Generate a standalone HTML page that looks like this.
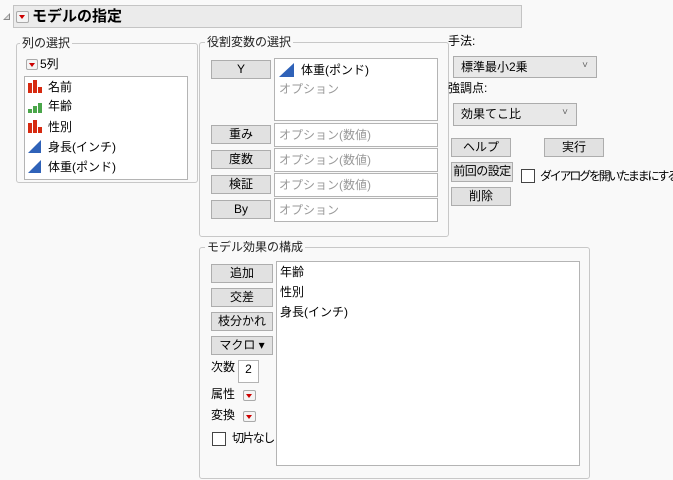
<!DOCTYPE html>
<html><head><meta charset="utf-8"><style>
body{margin:0;width:673px;height:480px;background:#f9f9f9;font-family:"Liberation Sans","Noto Sans CJK JP",sans-serif;font-size:12px;color:#000;position:relative;overflow:hidden}
.a{position:absolute}
.grp{position:absolute;border:1px solid #c8c8c8;border-radius:3px}
.lg{position:absolute;background:#f9f9f9;padding:0 2px;line-height:14px;color:#222}
.btn{position:absolute;background:#e1e1e1;border:1px solid #adadad;box-sizing:border-box;text-align:center;line-height:16px;font-size:12px}
.box{position:absolute;background:#fff;border:1px solid #b4b4b4;box-sizing:border-box}
.ph{color:#999;position:absolute;left:4px;line-height:14px}
.dd{position:absolute;width:12px;height:11px;border:1px solid #aaa;border-radius:2px;background:#f4f4f4;box-sizing:border-box}
.dd:after{content:"";position:absolute;left:2px;top:3px;border-left:3px solid transparent;border-right:3px solid transparent;border-top:4px solid #c00}
.it{position:absolute;line-height:16px;white-space:nowrap}
.cb{position:absolute;width:13px;height:13px;border:1px solid #333;background:#fff;box-sizing:border-box}
.sel{position:absolute;background:#e8e8e8;border:1px solid #acacac;box-sizing:border-box;line-height:20px;padding-left:7px}
.sel:after{content:"˅";position:absolute;right:8px;top:-1px;color:#666;font-size:10px}
</style></head><body>
<svg class="a" style="left:3px;top:13px" width="8" height="8"><path d="M7 0L7 7L0 7Z" fill="#888"/><path d="M6 2L6 6L2 6Z" fill="#ddd"/></svg>
<div class="a" style="left:13px;top:5px;width:509px;height:23px;background:#ebebeb;border:1px solid #c4c4c4;box-sizing:border-box"></div>
<div class="dd" style="left:16px;top:11px;width:13px;height:12px"></div>
<div class="a" style="left:32px;top:8px;font-size:15px;font-weight:bold;line-height:18px">モデルの指定</div>

<div class="grp" style="left:16px;top:43px;width:180px;height:138px"></div>
<div class="lg" style="left:20px;top:36px">列の選択</div>
<div class="dd" style="left:26px;top:59px"></div>
<div class="it" style="left:40px;top:56px">5列</div>
<div class="box" style="left:24px;top:76px;width:164px;height:104px"></div>
<svg class="a" style="left:28px;top:80px" width="14" height="14"><path d="M0 3h4v10H0zM5 0h4v13H5zM10 7h4v6h-4z" fill="#d62a10"/></svg>
<div class="it" style="left:48px;top:79px">名前</div>
<svg class="a" style="left:28px;top:100px" width="14" height="14"><path d="M0 9h4v4H0zM5 6h4v7H5zM10 3h4v10h-4z" fill="#4aa64a"/></svg>
<div class="it" style="left:48px;top:98px">年齢</div>
<svg class="a" style="left:28px;top:120px" width="14" height="14"><path d="M0 3h4v10H0zM5 0h4v13H5zM10 7h4v6h-4z" fill="#d62a10"/></svg>
<div class="it" style="left:48px;top:119px">性別</div>
<svg class="a" style="left:28px;top:140px" width="14" height="14"><path d="M0 13L13 0V13Z" fill="#2f62b8"/></svg>
<div class="it" style="left:48px;top:139px">身長(インチ)</div>
<svg class="a" style="left:28px;top:160px" width="14" height="14"><path d="M0 13L13 0V13Z" fill="#2f62b8"/></svg>
<div class="it" style="left:48px;top:159px">体重(ポンド)</div>

<div class="grp" style="left:199px;top:42px;width:248px;height:193px"></div>
<div class="lg" style="left:205px;top:35px">役割変数の選択</div>
<div class="btn" style="left:211px;top:60px;width:60px;height:19px">Y</div>
<div class="btn" style="left:211px;top:125px;width:60px;height:19px">重み</div>
<div class="btn" style="left:211px;top:150px;width:60px;height:19px">度数</div>
<div class="btn" style="left:211px;top:175px;width:60px;height:19px">検証</div>
<div class="btn" style="left:211px;top:200px;width:60px;height:19px">By</div>
<div class="box" style="left:274px;top:58px;width:164px;height:63px"></div>
<svg class="a" style="left:279px;top:63px" width="16" height="15"><path d="M0 14L15 0V14Z" fill="#2f62b8"/></svg>
<div class="it" style="left:301px;top:62px">体重(ポンド)</div>
<div class="ph" style="left:279px;top:82px">オプション</div>
<div class="box" style="left:274px;top:123px;width:164px;height:24px"><span class="ph" style="top:4px">オプション(数値)</span></div>
<div class="box" style="left:274px;top:148px;width:164px;height:24px"><span class="ph" style="top:4px">オプション(数値)</span></div>
<div class="box" style="left:274px;top:173px;width:164px;height:24px"><span class="ph" style="top:4px">オプション(数値)</span></div>
<div class="box" style="left:274px;top:198px;width:164px;height:24px"><span class="ph" style="top:4px">オプション</span></div>

<div class="it" style="left:448px;top:33px">手法:</div>
<div class="sel" style="left:453px;top:56px;width:144px;height:22px">標準最小2乗</div>
<div class="it" style="left:448px;top:80px">強調点:</div>
<div class="sel" style="left:453px;top:103px;width:124px;height:23px">効果てこ比</div>
<div class="btn" style="left:451px;top:138px;width:60px;height:19px">ヘルプ</div>
<div class="btn" style="left:544px;top:138px;width:60px;height:19px">実行</div>
<div class="btn" style="left:451px;top:162px;width:62px;height:20px;line-height:17px;letter-spacing:-0.5px">前回の設定</div>
<div class="cb" style="left:521px;top:169px;width:14px;height:14px;border-color:#444"></div>
<div class="it" style="left:540px;top:168px;letter-spacing:-2.2px">ダイアログを開いたままにする</div>
<div class="btn" style="left:451px;top:187px;width:60px;height:19px">削除</div>

<div class="grp" style="left:199px;top:247px;width:389px;height:230px"></div>
<div class="lg" style="left:205px;top:240px">モデル効果の構成</div>
<div class="btn" style="left:211px;top:264px;width:62px;height:19px">追加</div>
<div class="btn" style="left:211px;top:288px;width:62px;height:19px">交差</div>
<div class="btn" style="left:211px;top:312px;width:62px;height:19px">枝分かれ</div>
<div class="btn" style="left:211px;top:336px;width:62px;height:19px">マクロ ▾</div>
<div class="box" style="left:276px;top:261px;width:304px;height:205px"></div>
<div class="it" style="left:280px;top:264px">年齢</div>
<div class="it" style="left:280px;top:284px">性別</div>
<div class="it" style="left:280px;top:304px">身長(インチ)</div>
<div class="it" style="left:211px;top:359px">次数</div>
<div class="box" style="left:238px;top:360px;width:21px;height:23px;text-align:center;line-height:16px">2</div>
<div class="it" style="left:211px;top:386px">属性</div>
<div class="dd" style="left:243px;top:390px;width:13px"></div>
<div class="it" style="left:211px;top:407px">変換</div>
<div class="dd" style="left:243px;top:411px;width:13px"></div>
<div class="cb" style="left:212px;top:432px;width:14px;height:14px;border-color:#444"></div>
<div class="it" style="left:232px;top:430px;letter-spacing:-1.6px">切片なし</div>
</body></html>
